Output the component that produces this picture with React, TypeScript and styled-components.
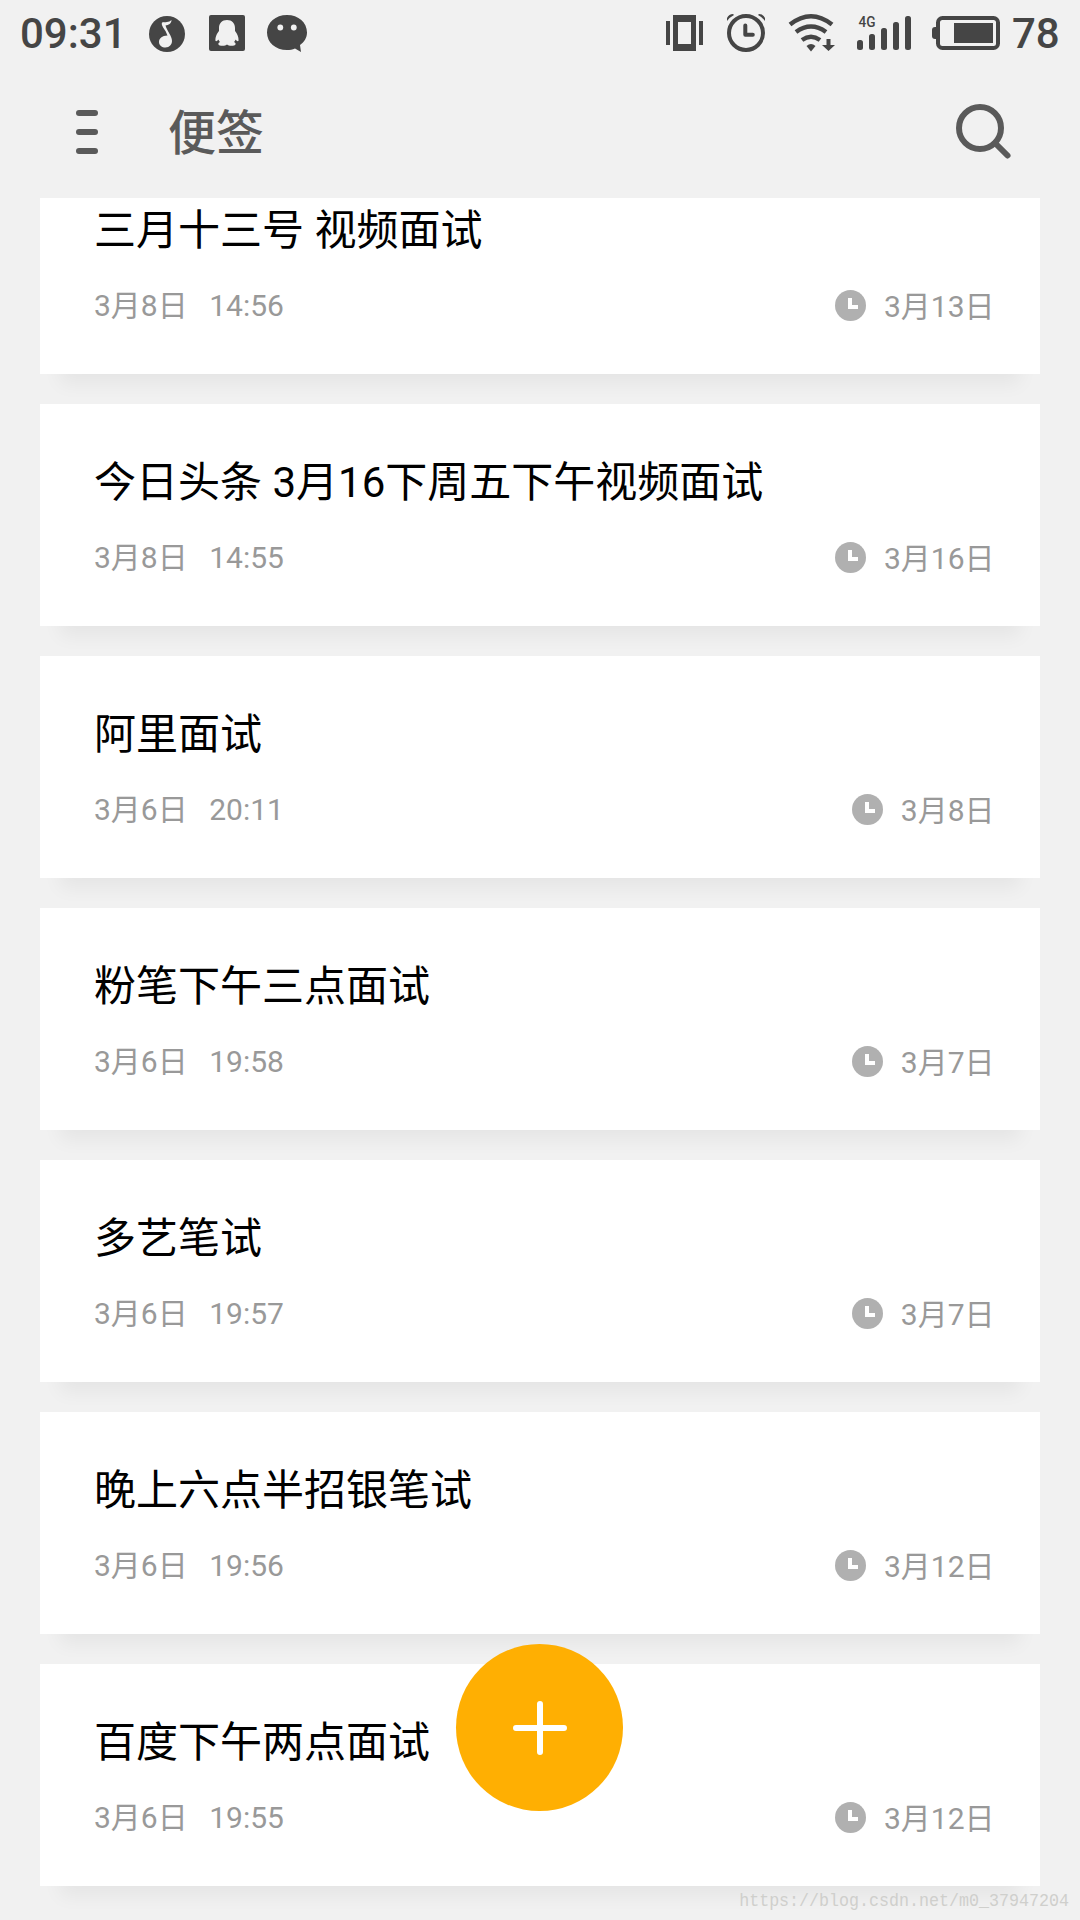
import React from "react";
import styled, { createGlobalStyle } from "styled-components";

const GlobalStyle = createGlobalStyle`
  * { box-sizing: border-box; }
  body {
    margin: 0;
    background: #f1f1f1;
    font-family: Roboto, "Noto Sans CJK SC", sans-serif;
  }
`;

const Screen = styled.main`
  position: relative;
  display: flex;
  flex-direction: column;
  width: 1080px;
  height: 1920px;
  overflow: hidden;
  background: #f1f1f1;
`;

const StatusBar = styled.header`
  display: flex;
  justify-content: space-between;
  flex: none;
  height: 66px;
  padding: 0 20px;
  color: #454545;
`;

const StatusGroup = styled.div`
  display: flex;
  align-items: center;
`;

const StatusText = styled.span<{ $width: number }>`
  width: ${(p) => p.$width}px;
  padding-top: 2px;
  font-size: 42px;
  font-weight: 500;
  line-height: 64px;
  white-space: nowrap;
`;

const StatusIcon = styled.svg<{ $gap: number }>`
  display: block;
  flex: none;
  height: 66px;
  margin-right: ${(p) => p.$gap}px;
  fill: currentColor;
`;

const AppBar = styled.div`
  display: flex;
  align-items: center;
  flex: none;
  height: 132px;
  padding: 0 68px 0 76px;
  color: #5a5a5a;
`;

const MenuButton = styled.button`
  display: flex;
  flex-direction: column;
  gap: 13px;
  width: 22px;
  margin-right: 70px;
  padding: 0;
  border: 0;
  background: none;
`;

const MenuLine = styled.span`
  height: 6px;
  border-radius: 3px;
  background: #5a5a5a;
`;

const AppTitle = styled.h1`
  flex: 1;
  margin: 0;
  padding-top: 4px;
  font-size: 48px;
  font-weight: 500;
  line-height: 128px;
`;

const SearchButton = styled.button`
  width: 56px;
  height: 56px;
  padding: 0;
  border: 0;
  background: none;
  color: #5a5a5a;
`;

const NoteList = styled.ul`
  display: flex;
  flex-direction: column;
  flex: 1;
  gap: 30px;
  min-height: 0;
  margin: 0;
  padding: 0 40px;
  overflow: hidden;
  list-style: none;
`;

const NoteCard = styled.li<{ $scrolled: boolean }>`
  flex: none;
  height: 222px;
  margin-top: ${(p) => (p.$scrolled ? -46 : 0)}px;
  padding: 49px 45.5px 0 54px;
  background: #fff;
  box-shadow: 0 30px 18px -20px rgba(0, 0, 0, 0.05);
`;

const NoteTitle = styled.h2`
  margin: 0;
  color: #000;
  font-size: 42px;
  font-weight: 400;
  line-height: 60px;
  white-space: pre;
`;

const NoteMeta = styled.div`
  display: flex;
  align-items: center;
  justify-content: space-between;
  height: 36px;
  margin-top: 27px;
  color: #999;
  font-size: 30px;
  line-height: 36px;
`;

const Created = styled.span`
  display: flex;
  gap: 21.5px;
`;

const Reminder = styled.span`
  display: flex;
  align-items: center;
  gap: 17.5px;
  padding-top: 1px;
`;

const ClockFace = styled.svg`
  display: block;
  width: 31px;
  height: 31px;
  margin-bottom: 2px;
`;

const AddButton = styled.button`
  position: absolute;
  left: 456px;
  bottom: 109px;
  display: grid;
  place-items: center;
  width: 167px;
  height: 167px;
  padding: 0;
  border: 0;
  border-radius: 50%;
  background: #ffaf02;
`;

const Watermark = styled.span`
  position: absolute;
  right: 11px;
  bottom: 7px;
  color: #cfcfcc;
  font-family: "Liberation Mono", monospace;
  font-size: 16.67px;
  line-height: 24px;
  transform: scaleY(1.15);
`;

const ClockIcon = () => (
  <ClockFace viewBox="0 0 31 31">
    <circle cx="15.5" cy="15.5" r="15.5" fill="#b0b0b0" />
    <path d="M13 8h4v7h6v4H13z" fill="#fff" />
  </ClockFace>
);

const notes = [
  { title: "三月十三号 视频面试", date: "3月8日", time: "14:56", due: "3月13日" },
  { title: "今日头条 3月16下周五下午视频面试", date: "3月8日", time: "14:55", due: "3月16日" },
  { title: "阿里面试", date: "3月6日", time: "20:11", due: "3月8日" },
  { title: "粉笔下午三点面试", date: "3月6日", time: "19:58", due: "3月7日" },
  { title: "多艺笔试", date: "3月6日", time: "19:57", due: "3月7日" },
  { title: "晚上六点半招银笔试", date: "3月6日", time: "19:56", due: "3月12日" },
  { title: "百度下午两点面试", date: "3月6日", time: "19:55", due: "3月12日" },
];

export default function App() {
  return (
    <Screen>
      <GlobalStyle />
      <StatusBar>
        <StatusGroup>
          <StatusText $width={129}>09:31</StatusText>
          <StatusIcon $gap={24} width="36" viewBox="149 0 36 66">
            <circle cx="167" cy="34" r="18" />
            <path
              fill="#f1f1f1"
              d="M171.500 20C169 22.500 165 22 162 22.500C161 25 163.500 28 165.500 31L167.500 35.500C162 35.500 159 38.500 159 42C159 45.500 162 47.500 165.500 47.500C169.500 47.500 172 44.500 172 41C172 36 167 31 165.500 25.500C168.500 25 171.500 23.500 171.500 20Z"
            />
          </StatusIcon>
          <StatusIcon $gap={22} width="36" viewBox="209 0 36 66">
            <rect x="209" y="15" width="36" height="36" rx="2" />
            <path
              fill="#f1f1f1"
              d="M227 20C222 20 219 23.500 219 28V31C217.500 33 215 36.500 215.500 41C216.500 41.500 218 40.500 218.500 39.500C219 41 219.500 41.500 220 42C217.500 43 218 45.500 221 45.800C224 46 226 45.500 227 44.500C228 45.500 230 46 233 45.800C236 45.500 236.500 43 234 42C234.500 41.500 235 41 235.500 39.500C236 40.500 237.500 41.500 238.500 41C239 36.500 236.500 33 235 31V28C235 23.500 232 20 227 20Z"
            />
          </StatusIcon>
          <StatusIcon $gap={0} width="40" viewBox="267 0 40 66">
            <path d="M287 15C275.500 15 267 22.500 267 32.500C267 42.500 275.500 50 287 50C290 50 292.500 49.500 295 48.500L301 52L300 45C304.500 42 307 37.500 307 32.500C307 22.500 298.500 15 287 15Z" />
            <circle cx="280.300" cy="27.500" r="2.900" fill="#f1f1f1" />
            <circle cx="293.800" cy="27.500" r="2.900" fill="#f1f1f1" />
          </StatusIcon>
        </StatusGroup>
        <StatusGroup>
          <StatusIcon $gap={23} width="38" viewBox="666 0 38 66">
            <path fillRule="evenodd" d="M673 15h23v36h-23zM678 22v22h13v-22z" />
            <path d="M666 21h4v24h-4zM699 21h4v24h-4z" />
          </StatusIcon>
          <StatusIcon $gap={22} width="39" viewBox="727 0 39 66">
            <g fill="none" stroke="currentColor">
              <circle cx="746" cy="33" r="17" strokeWidth="4" />
              <path d="M745.300 25.500v9.200h7.500" strokeWidth="4" strokeLinecap="round" strokeLinejoin="round" />
            </g>
            <path d="M727 21V18Q729 14 733 14L734 15Q730 17 727 21ZM765 21V18Q763 14 759 14L758 15Q762 17 765 21Z" />
          </StatusIcon>
          <StatusIcon $gap={21} width="47" viewBox="788 0 47 66">
            <g fill="none" stroke="currentColor" strokeWidth="4.500">
              <path d="M790 24.500Q811 8 832 24.500" />
              <path d="M796 32Q811 21 826 32" />
              <path d="M802 40Q811 33.500 820 40" />
            </g>
            <path d="M806.500 46Q811 42 815.500 46L811 51.500Z" />
            <path d="M826.500 39h4v6h4.500L828.500 51L822 45h4.500z" />
          </StatusIcon>
          <StatusIcon $gap={20} width="56" viewBox="856 0 56 66">
            <text x="858.500" y="27" fontSize="14" fontWeight="500" textLength="17" lengthAdjust="spacingAndGlyphs">
              4G
            </text>
            <rect x="857" y="40" width="6" height="10" rx="2.500" />
            <rect x="869" y="34" width="6" height="16" rx="2.500" />
            <rect x="881" y="28" width="6" height="22" rx="2.500" />
            <rect x="893" y="22" width="6" height="28" rx="2.500" />
            <rect x="905" y="16" width="6" height="34" rx="2.500" />
          </StatusIcon>
          <StatusIcon $gap={12} width="68" viewBox="932 0 68 66">
            <rect x="938" y="18" width="60" height="30" rx="4.500" fill="none" stroke="currentColor" strokeWidth="4" />
            <path d="M937 27h-2q-3 0-3 3v6q0 3 3 3h2z" />
            <rect x="954" y="23" width="39" height="20" />
          </StatusIcon>
          <StatusText $width={48}>78</StatusText>
        </StatusGroup>
      </StatusBar>
      <AppBar>
        <MenuButton aria-label="菜单">
          <MenuLine />
          <MenuLine />
          <MenuLine />
        </MenuButton>
        <AppTitle>便签</AppTitle>
        <SearchButton aria-label="搜索">
          <svg width="56" height="56" viewBox="0 0 56 56">
            <g fill="none" stroke="currentColor" strokeWidth="6">
              <circle cx="24" cy="24" r="21" />
              <path d="M39 39L51.500 51.500" strokeLinecap="round" />
            </g>
          </svg>
        </SearchButton>
      </AppBar>
      <NoteList>
        {notes.map((note, i) => (
          <NoteCard key={note.title} $scrolled={i === 0}>
            <NoteTitle>{note.title}</NoteTitle>
            <NoteMeta>
              <Created>
                <span>{note.date}</span>
                <span>{note.time}</span>
              </Created>
              <Reminder>
                <ClockIcon />
                <span>{note.due}</span>
              </Reminder>
            </NoteMeta>
          </NoteCard>
        ))}
      </NoteList>
      <AddButton aria-label="新建便签">
        <svg width="54" height="54" viewBox="0 0 54 54">
          <path d="M27 3v48M3 27h48" stroke="#fff" strokeWidth="6" strokeLinecap="round" />
        </svg>
      </AddButton>
      <Watermark>https://blog.csdn.net/m0_37947204</Watermark>
    </Screen>
  );
}
